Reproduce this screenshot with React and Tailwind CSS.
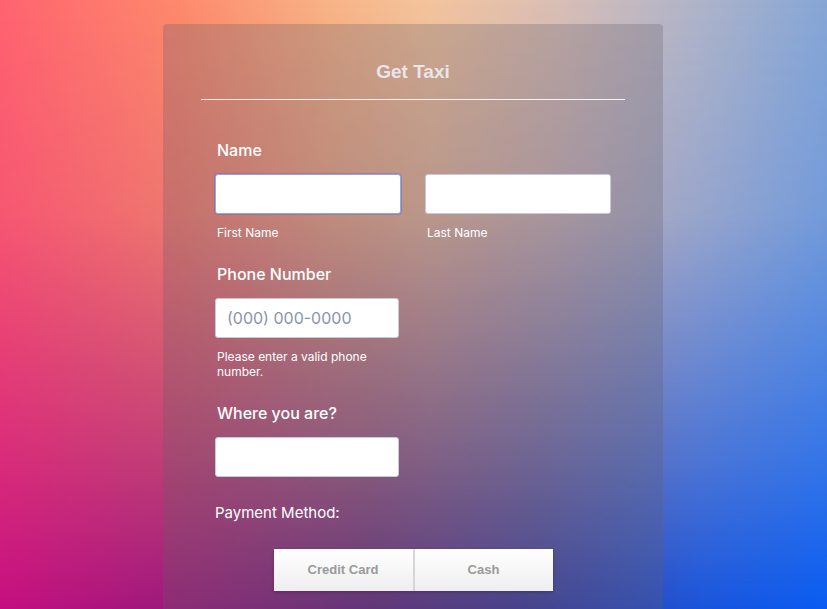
import { useState } from "react";

function Field({ label, children }) {
  return (
    <div>
      <label className="block pl-[2px] text-[16px] leading-6 font-medium text-white">
        {label}
      </label>
      {children}
    </div>
  );
}

function App() {
  const [payment, setPayment] = useState(null);

  return (
    <div className="relative h-[609px] overflow-hidden font-['Inter',sans-serif] bg-[linear-gradient(to_right,#c60f80_0%,#9a1a7c_22%,#62287f_45%,#3a3c9e_65%,#1a55dc_85%,#0a5cf2_100%)]">
      {/* warm upper wash that fades out toward the bottom */}
      <div className="absolute inset-0 bg-[linear-gradient(to_right,#ff636f_0%,#fd8a6c_22%,#f8b486_40%,#f4c49c_52%,#d8beb6_68%,#b0b4c8_84%,#86a6d6_100%)] [mask-image:linear-gradient(to_bottom,black_0%,rgba(0,0,0,0.85)_35%,rgba(0,0,0,0.35)_75%,transparent_100%)]" />

      <div className="relative pt-[24px] pl-[163px]">
        <div className="w-[500px] h-[600px] rounded-[4px] bg-[rgba(100,95,105,0.28)] px-[38px]">
          <h1 className="pt-[36px] pb-[16px] text-center text-[19px] leading-[23px] font-bold text-[#e9e6ea] font-['Liberation_Sans',Arial,sans-serif]">
            Get Taxi
          </h1>
          <div className="h-px bg-white/90" />

          <form className="px-[14px] pt-[38px]">
            <Field label="Name">
              <div className="mt-[12px] flex gap-[24px]">
                <div className="w-[186px]">
                  <input className="block w-full h-[40px] rounded-[3px] bg-white border border-[#8ea6f5] shadow-[0_0_0_1px_rgba(90,100,170,0.35)] outline-none px-3" />
                  <div className="mt-[11px] pl-[2px] text-[12px] leading-4 text-white">First Name</div>
                </div>
                <div className="w-[186px]">
                  <input className="block w-full h-[40px] rounded-[3px] bg-white border border-[#c8cbd6] outline-none px-3" />
                  <div className="mt-[11px] pl-[2px] text-[12px] leading-4 text-white">Last Name</div>
                </div>
              </div>
            </Field>

            <div className="mt-[21px]">
              <Field label="Phone Number">
                <input
                  placeholder="(000) 000-0000"
                  className="mt-[12px] block w-[184px] h-[40px] rounded-[3px] bg-white border border-[#c8cbd6] outline-none px-[11px] text-[16px] placeholder:text-[#8a94a8]"
                />
                <p className="mt-[11px] w-[184px] pl-[2px] text-[12px] leading-[15px] text-white">
                  Please enter a valid phone number.
                </p>
              </Field>
            </div>

            <div className="mt-[22px]">
              <Field label="Where you are?">
                <input className="mt-[12px] block w-[184px] h-[40px] rounded-[3px] bg-white border border-[#c8cbd6] outline-none px-3" />
              </Field>
            </div>

            <div className="mt-[26px] text-[15px] leading-5 text-white">Payment Method:</div>

            <div className="mt-[26px] flex justify-center">
              <div className="flex shadow-[0_1px_3px_rgba(0,0,0,0.25)]">
                <button
                  type="button"
                  onClick={() => setPayment("card")}
                  className={`w-[141px] h-[42px] border-r-2 border-[#d6d6d6] bg-[linear-gradient(to_bottom,#ffffff,#eeeeee)] text-[13px] font-bold font-['Liberation_Sans',Arial,sans-serif] ${payment === "card" ? "text-[#555]" : "text-[#9a9a9a]"}`}
                >
                  Credit Card
                </button>
                <button
                  type="button"
                  onClick={() => setPayment("cash")}
                  className={`w-[138px] h-[42px] bg-[linear-gradient(to_bottom,#ffffff,#eeeeee)] text-[13px] font-bold font-['Liberation_Sans',Arial,sans-serif] ${payment === "cash" ? "text-[#555]" : "text-[#9a9a9a]"}`}
                >
                  Cash
                </button>
              </div>
            </div>
          </form>
        </div>
      </div>
    </div>
  );
}

export default App;
